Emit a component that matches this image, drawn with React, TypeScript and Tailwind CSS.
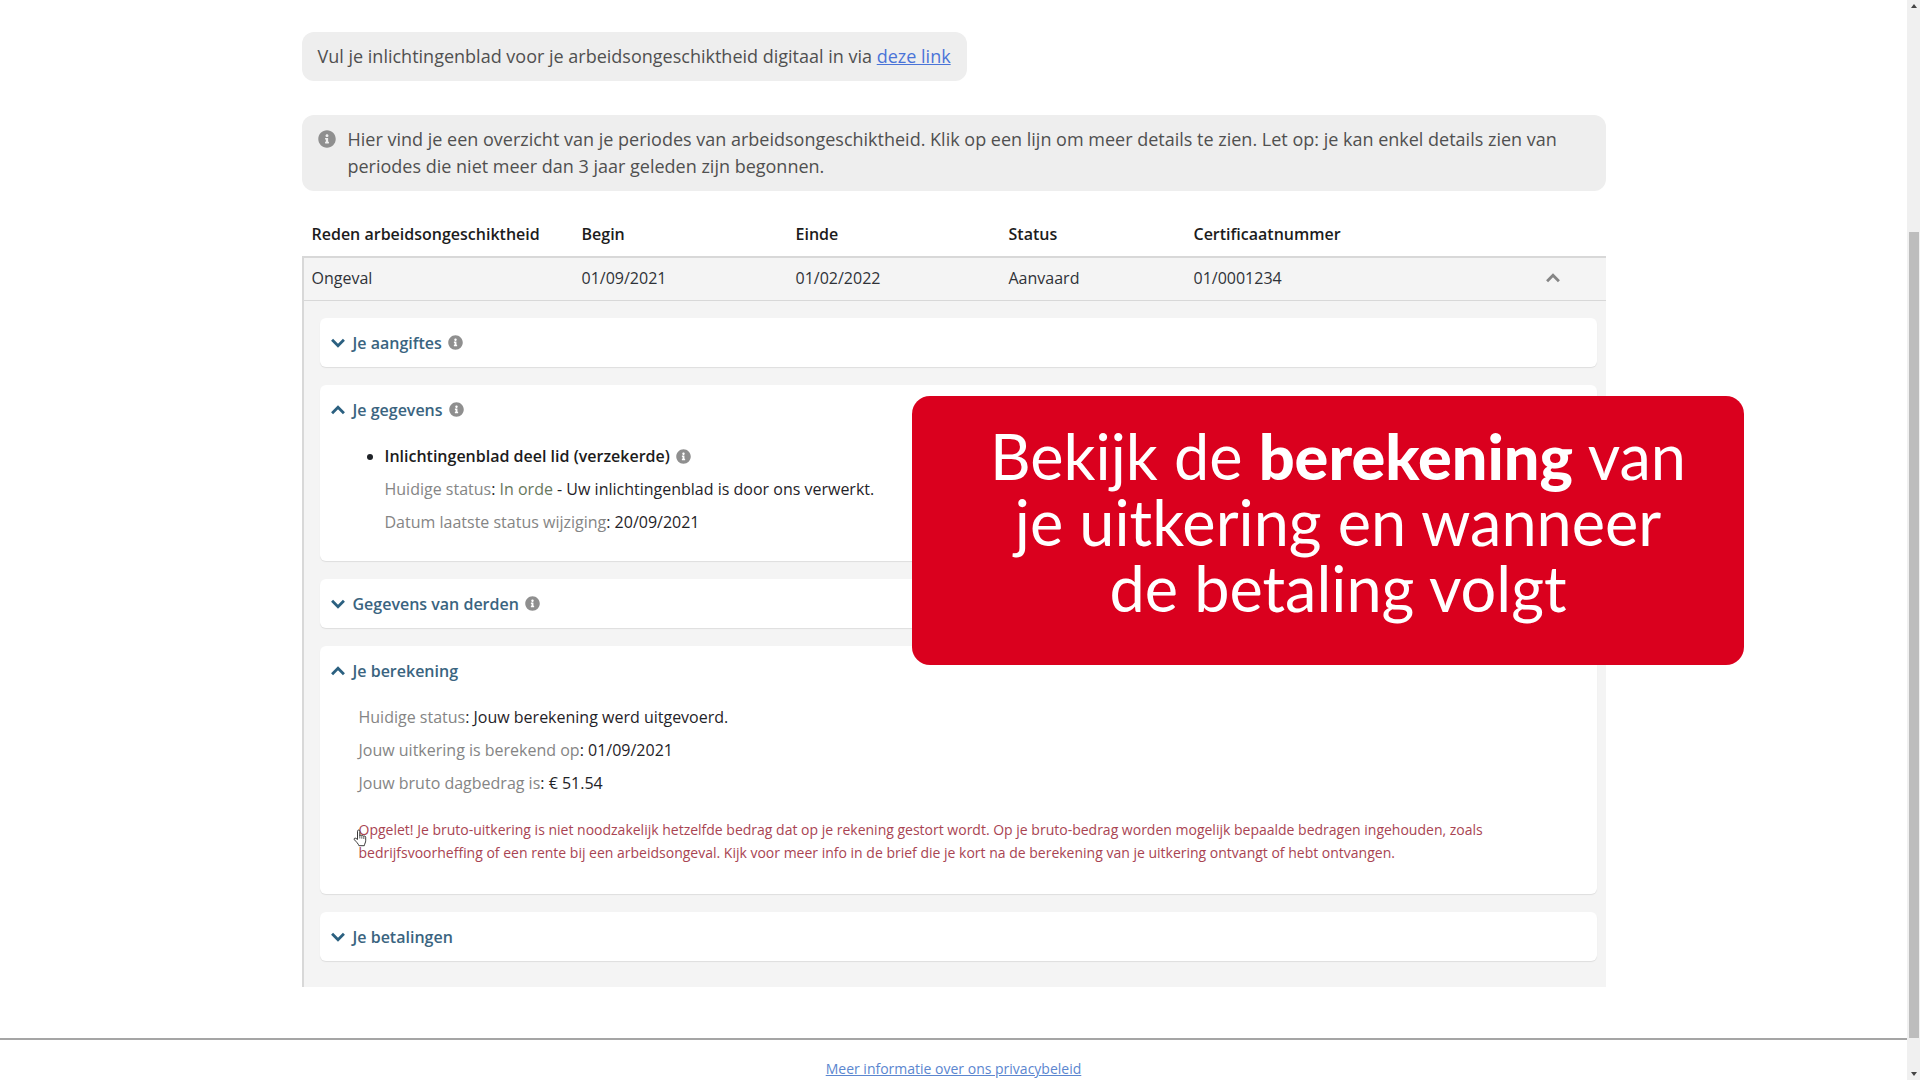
import React, { useState } from 'react';
import { FaInfoCircle } from 'react-icons/fa';

interface ChevronProps {
    open: boolean;
    className?: string;
}

const Chevron: React.FC<ChevronProps> = ({ open, className }) => (
    <svg viewBox="0 0 13 9" className={className} fill="none" stroke="currentColor" strokeWidth="2.6">
        <path d={open ? 'M1 7.5 6.5 2 12 7.5' : 'M1 1.5 6.5 7 12 1.5'} />
    </svg>
);

interface PanelProps {
    title: string;
    info?: boolean;
    defaultOpen?: boolean;
    children?: React.ReactNode;
}

const Panel: React.FC<PanelProps> = ({ title, info, defaultOpen = false, children }) => {
    const [open, setOpen] = useState(defaultOpen);

    return (
        <section className="bg-white rounded-md shadow-[0_1px_1px_#dedede]">
            <button
                onClick={() => setOpen(!open)}
                aria-expanded={open}
                className="flex items-center w-full h-[49px] pl-[11px] pr-3 font-semibold text-[#3a6480]"
            >
                <Chevron open={open} className="w-[14px] h-[10px] mr-2 text-[#2b6080]" />
                {title}
                {info && <FaInfoCircle className="w-[15px] h-[15px] ml-[6px] text-[#8f8f8f]" />}
            </button>
            {open && children}
        </section>
    );
};

interface FieldProps {
    label: string;
    children: React.ReactNode;
}

const Field: React.FC<FieldProps> = ({ label, children }) => (
    <p>
        <span className="text-[#858585]">{label}</span>: {children}
    </p>
);

const HandCursor: React.FC = () => (
    <svg viewBox="0 0 14 18" className="absolute left-[-6px] top-[11px] w-[14px] h-[18px]">
        <path
            d="M4.5 10.5V2.2C4.5.6 6.8.6 6.8 2.2V7c0-1.2 2-1.1 2 .2 0-1 2-.9 2 .4 0-.9 1.9-.8 1.9.6v3.600c0 1.600-1 2.600-1.400 4.900H5.900C5.500 14.900 3 12.500 1.400 10.800.5 9.700 1.900 8.500 3 9.400z"
            fill="#fff"
            stroke="#3a3a3a"
            strokeWidth="1"
            strokeLinejoin="round"
        />
        <path d="M6.8 7v2.500M8.800 7.500v2.200M10.800 8v2" stroke="#3a3a3a" strokeWidth=".8" />
    </svg>
);

const PeriodTable: React.FC = () => {
    const [open, setOpen] = useState(true);

    return (
        <table className="w-full mt-5 table-fixed border-separate border-spacing-0 text-left">
            <thead>
                <tr className="h-[45px] text-[#1c1c1c]">
                    <th className="w-[270px] pl-[10px] font-semibold">Reden arbeidsongeschiktheid</th>
                    <th className="w-[214px] pl-[10px] font-semibold">Begin</th>
                    <th className="w-[213px] pl-[10px] font-semibold">Einde</th>
                    <th className="w-[185px] pl-[10px] font-semibold">Status</th>
                    <th className="pl-[10px] font-semibold">Certificaatnummer</th>
                    <th className="w-[106px]" />
                </tr>
            </thead>
            <tbody className="bg-[#f4f4f4] text-[#2f3238]">
                <tr className="h-[45px] [&>td]:pb-[2px]">
                    <td className="pl-2 border-l-2 border-t-2 border-b border-[#d8d8d8]">Ongeval</td>
                    <td className="pl-[10px] border-t-2 border-b border-[#d8d8d8]">01/09/2021</td>
                    <td className="pl-[10px] border-t-2 border-b border-[#d8d8d8]">01/02/2022</td>
                    <td className="pl-[10px] border-t-2 border-b border-[#d8d8d8]">Aanvaard</td>
                    <td className="pl-[10px] border-t-2 border-b border-[#d8d8d8]">01/0001234</td>
                    <td className="border-t-2 border-b border-[#d8d8d8]">
                        <button
                            onClick={() => setOpen(!open)}
                            aria-label="Details"
                            className="block mx-auto text-[#858585]"
                        >
                            <Chevron open={open} className="w-[14px] h-[10px]" />
                        </button>
                    </td>
                </tr>
                {open && (
                    <tr>
                        <td colSpan={6} className="pt-[17px] pr-[9px] pb-[26px] pl-4 border-l-2 border-[#d8d8d8]">
                            <div className="flex flex-col gap-[18px]">
                                <Panel title="Je aangiftes" info />
                                <Panel title="Je gegevens" info defaultOpen>
                                    <ul className="pt-[6px] pb-[22px] pl-[65px] list-disc leading-[33px] text-[#1f2328]">
                                        <li>
                                            <span className="flex items-center font-semibold text-[#1c1c1c]">
                                                Inlichtingenblad deel lid (verzekerde)
                                                <FaInfoCircle className="w-[15px] h-[15px] ml-[6px] text-[#8f8f8f]" />
                                            </span>
                                            <Field label="Huidige status">
                                                <span className="text-[#68785c]">In orde</span> - Uw inlichtingenblad is
                                                door ons verwerkt.
                                            </Field>
                                            <Field label="Datum laatste status wijziging">20/09/2021</Field>
                                        </li>
                                    </ul>
                                </Panel>
                                <Panel title="Gegevens van derden" info />
                                <Panel title="Je berekening" defaultOpen>
                                    <div className="pt-[6px] px-[39px] pb-[30px] leading-[33px] text-[#1f2328]">
                                        <Field label="Huidige status">Jouw berekening werd uitgevoerd.</Field>
                                        <Field label="Jouw uitkering is berekend op">01/09/2021</Field>
                                        <Field label="Jouw bruto dagbedrag is">€ 51.54</Field>
                                        <div className="relative mt-[18px] text-sm leading-[23px] text-[#a94452]">
                                            <p>
                                                Opgelet! Je bruto-uitkering is niet noodzakelijk hetzelfde bedrag dat op
                                                je rekening gestort wordt. Op je bruto-bedrag worden mogelijk bepaalde
                                                bedragen ingehouden, zoals bedrijfsvoorheffing of een rente bij een
                                                arbeidsongeval. Kijk voor meer info in de brief die je kort na de
                                                berekening van je uitkering ontvangt of hebt ontvangen.
                                            </p>
                                            <HandCursor />
                                        </div>
                                    </div>
                                </Panel>
                                <Panel title="Je betalingen" />
                            </div>
                        </td>
                    </tr>
                )}
            </tbody>
        </table>
    );
};

const Scrollbar: React.FC = () => (
    <div className="flex flex-col items-center justify-between w-[13px] shrink-0 py-1 bg-[#f0f0f0]">
        <svg viewBox="0 0 6 4" className="w-[6px] h-1" fill="#444">
            <path d="M0 4 3 0 6 4z" />
        </svg>
        <div className="flex-1 w-[10px] mt-[224px] mb-[34px] bg-[#bdbdbd]" />
        <svg viewBox="0 0 6 4" className="w-[6px] h-1" fill="#444">
            <path d="M0 0 3 4 6 0z" />
        </svg>
    </div>
);

export default function App() {
    return (
        <div className="relative flex h-screen overflow-hidden bg-white font-['Open_Sans',sans-serif] text-base">
            <div className="flex-1 min-w-0">
                <main className="max-w-[1304px] mx-auto pt-8">
                    <p className="w-fit px-4 py-[11px] rounded-xl bg-[#eee] text-lg leading-[27px] text-[#505050]">
                        Vul je inlichtingenblad voor je arbeidsongeschiktheid digitaal in via{' '}
                        <a href="#" className="text-[#4a74d8] underline">
                            deze link
                        </a>
                    </p>
                    <div className="flex mt-[34px] px-4 py-[11px] rounded-xl bg-[#eee] text-lg leading-[27px] text-[#505050]">
                        <FaInfoCircle className="w-[18px] h-[18px] mt-1 mr-3 shrink-0 text-[#8f8f8f]" />
                        <p>
                            Hier vind je een overzicht van je periodes van arbeidsongeschiktheid. Klik op een lijn om
                            meer details te zien. Let op: je kan enkel details zien van periodes die niet meer dan 3
                            jaar geleden zijn begonnen.
                        </p>
                    </div>
                    <PeriodTable />
                </main>
                <footer className="mt-[51px] pt-[17px] border-t-2 border-[#a5a5a5] text-center text-sm leading-6">
                    <a href="#" className="text-[#5b86cf] underline">
                        Meer informatie over ons privacybeleid
                    </a>
                </footer>
            </div>
            <Scrollbar />
            {/* caption on top of the page */}
            <div className="absolute top-[396px] right-44 w-[832px] h-[269px] pt-[27px] pl-5 rounded-[18px] bg-[#da001e] text-center font-['Lato',sans-serif] text-[63px] leading-[66px] text-white">
                Bekijk de <strong className="font-black">berekening</strong> van
                <br />
                je uitkering en wanneer
                <br />
                de betaling volgt
            </div>
        </div>
    );
}
